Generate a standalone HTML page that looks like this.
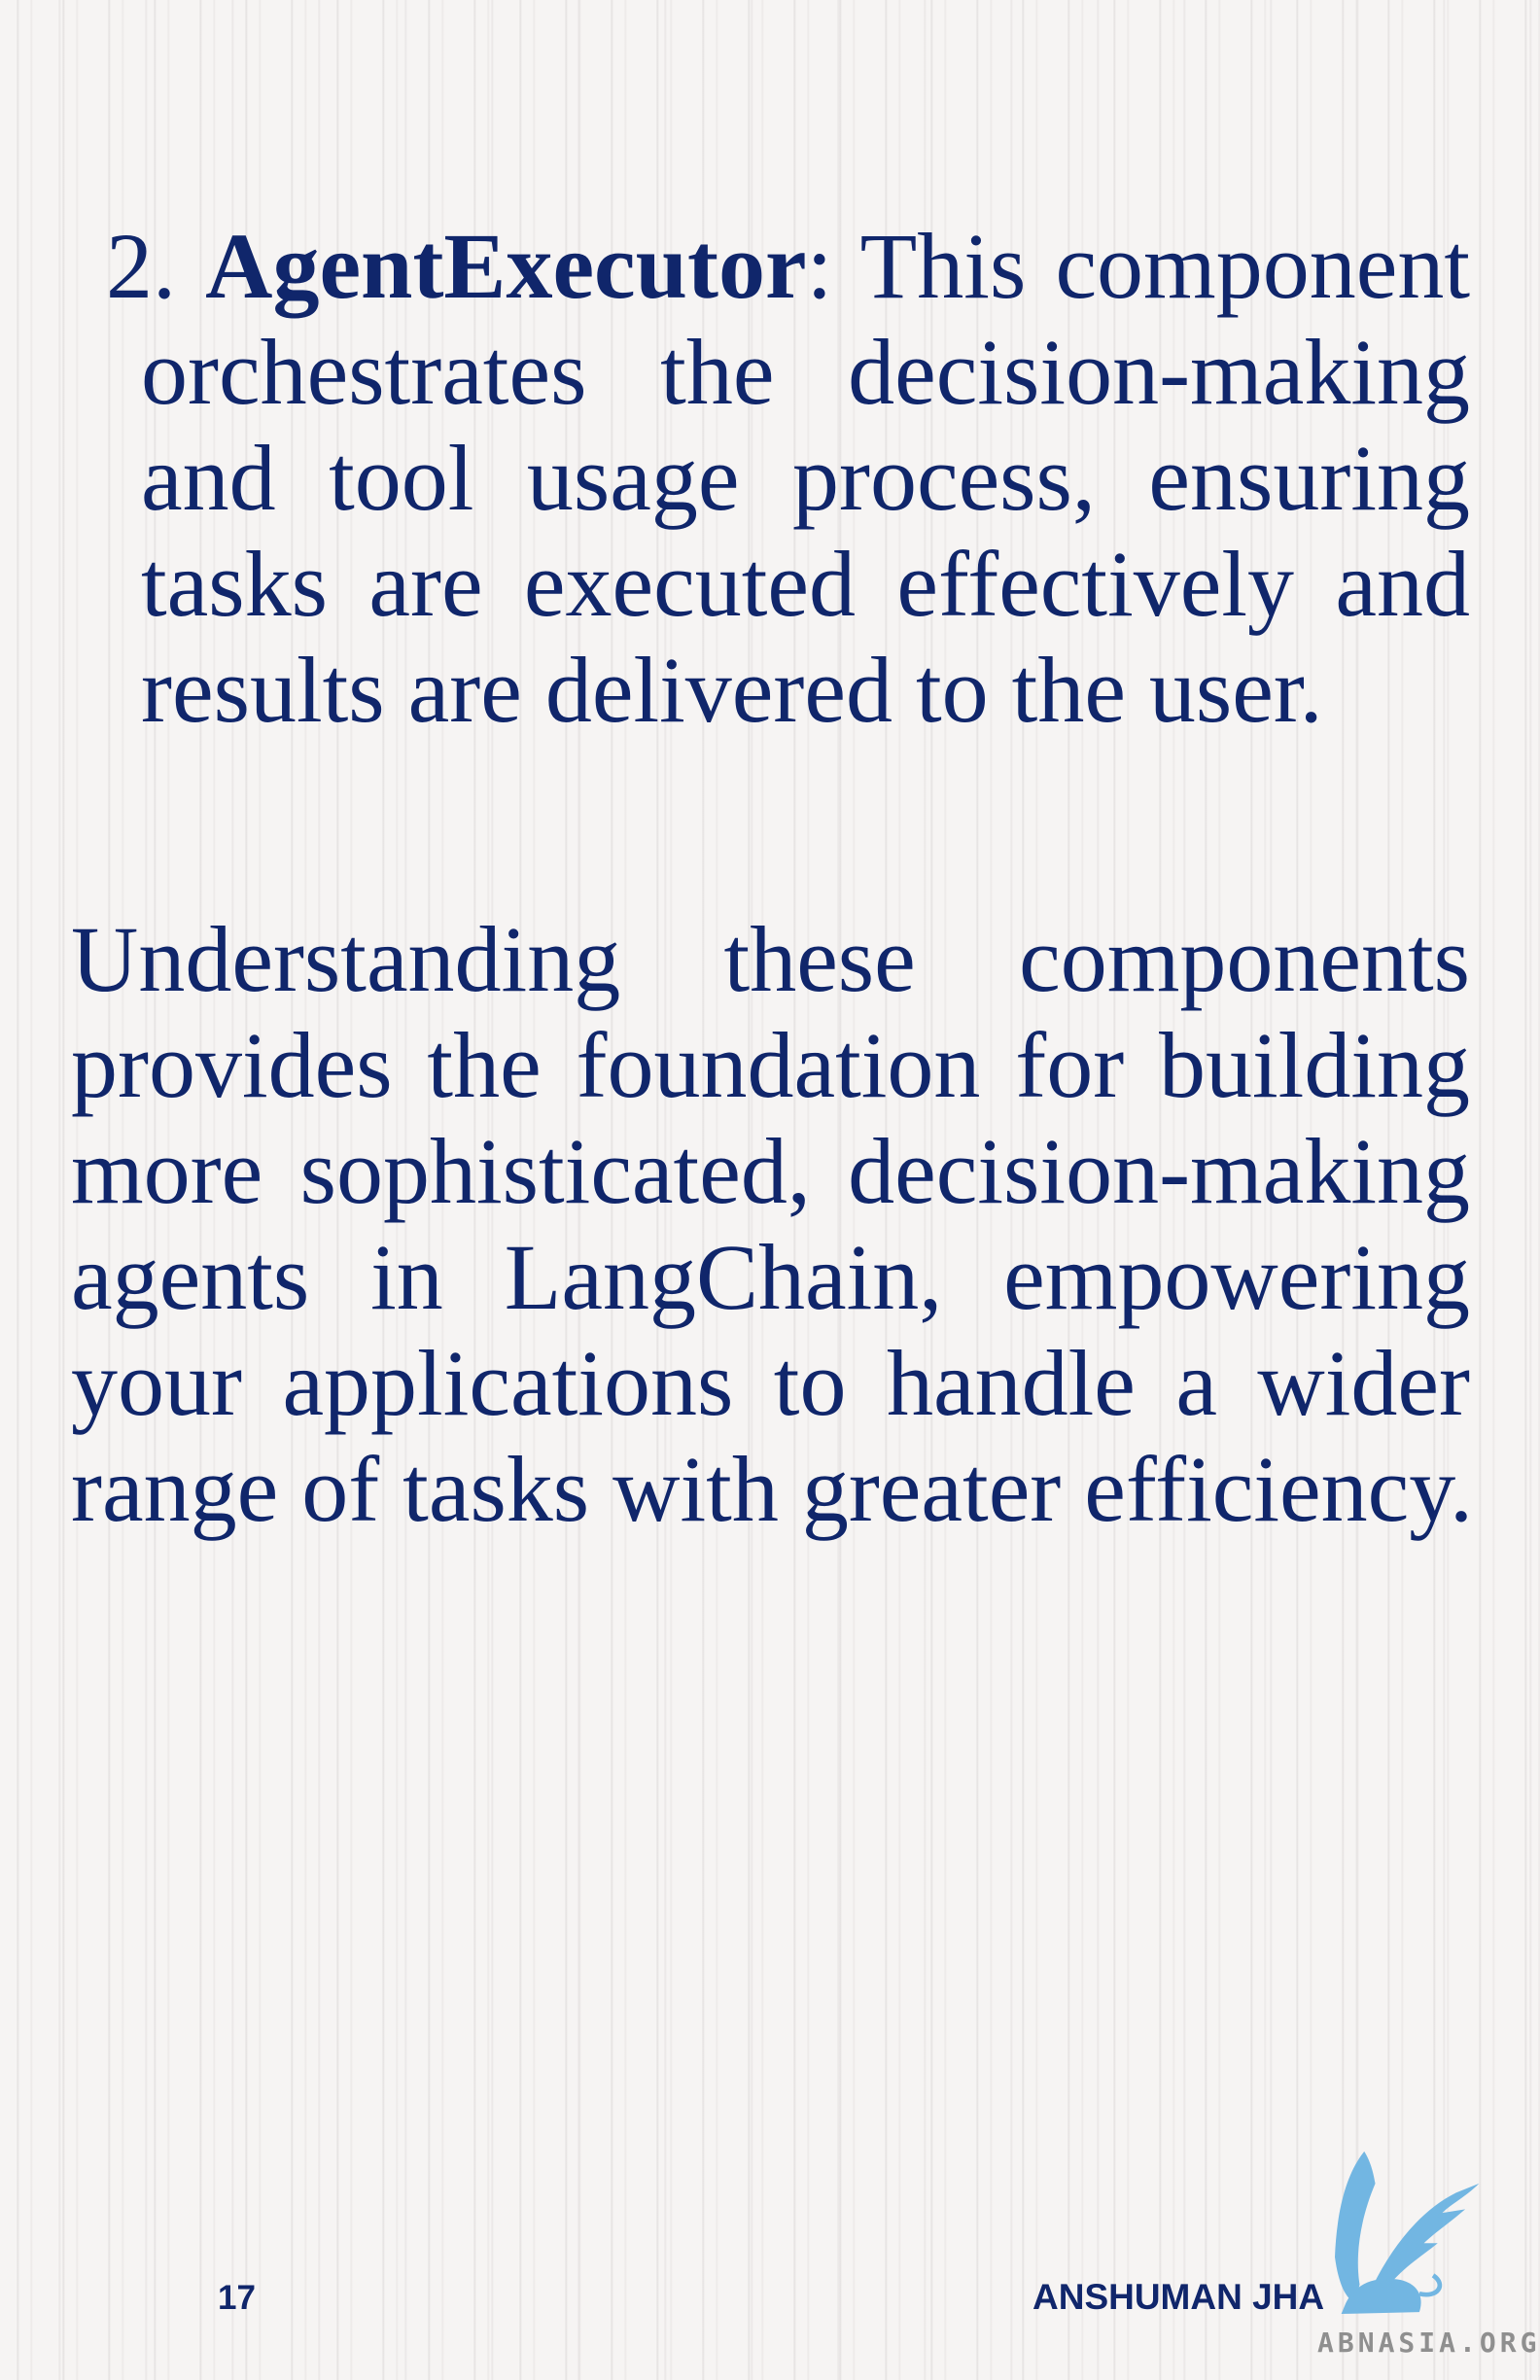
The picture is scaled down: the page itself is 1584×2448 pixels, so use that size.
<!DOCTYPE html>
<html><head><meta charset="utf-8"><style>
html,body{margin:0;padding:0}
body{width:1584px;height:2448px;position:relative;overflow:hidden;
background-color:#f6f4f3;
background-image:
repeating-linear-gradient(90deg, rgba(0,0,0,0) 0px, rgba(0,0,0,0) 17px, rgba(190,185,185,0.35) 18px, rgba(0,0,0,0) 20px, rgba(0,0,0,0) 31px, rgba(215,210,210,0.35) 32px, rgba(0,0,0,0) 34px, rgba(0,0,0,0) 47px),
repeating-linear-gradient(90deg, rgba(0,0,0,0) 0px, rgba(0,0,0,0) 60px, rgba(200,195,195,0.3) 61px, rgba(0,0,0,0) 63px, rgba(0,0,0,0) 89px);
font-family:"Liberation Serif",serif;color:#10266b}
.l{position:absolute;font-size:96px;line-height:109px;white-space:nowrap}
.j{text-align:justify;text-align-last:justify;white-space:normal}
.foot{position:absolute;font-family:"Liberation Sans",sans-serif;font-weight:bold;color:#10266b}
</style></head><body>
<div class="l j" style="left:109px;top:219px;width:1403px">2. <b>AgentExecutor</b>: This component</div>
<div class="l j" style="left:145px;top:328px;width:1367px">orchestrates the decision-making</div>
<div class="l j" style="left:145px;top:437px;width:1367px">and tool usage process, ensuring</div>
<div class="l j" style="left:145px;top:546px;width:1367px">tasks are executed effectively and</div>
<div class="l" style="left:145px;top:655px">results are delivered to the user.</div>

<div class="l j" style="left:73px;top:932px;width:1439px">Understanding these components</div>
<div class="l j" style="left:73px;top:1041px;width:1439px">provides the foundation for building</div>
<div class="l j" style="left:73px;top:1150px;width:1439px">more sophisticated, decision-making</div>
<div class="l j" style="left:73px;top:1259px;width:1439px">agents in LangChain, empowering</div>
<div class="l j" style="left:73px;top:1368px;width:1439px">your applications to handle a wider</div>
<div class="l" style="left:73px;top:1477px">range of tasks with greater efficiency.</div>

<div class="foot" style="left:224px;top:2344px;font-size:35px">17</div>
<div class="foot" style="left:1062px;top:2342px;font-size:37px">ANSHUMAN JHA</div>
<svg style="position:absolute;left:1356px;top:2208px" width="170" height="175" viewBox="0 0 180 185">
<g fill="#72b6e2">
<path d="M50 5 C30 30 20 70 18 120 C22 150 30 165 40 170 L45 150 C40 120 45 80 62 40 C60 30 58 18 50 5Z"/>
<path d="M60 150 C80 110 110 70 150 50 L175 40 C160 55 145 62 135 72 L160 68 C140 85 125 95 115 105 L130 105 C112 120 90 132 70 160Z"/>
<path d="M30 170 C40 150 60 140 90 145 C110 150 115 165 110 180 L25 182Z"/>
<path d="M110 160 C130 165 140 150 125 140" fill="none" stroke="#72b6e2" stroke-width="5"/>
</g>
</svg>
<div style="position:absolute;left:1355px;top:2393px;font-family:'DejaVu Sans Mono',monospace;font-weight:bold;font-size:28px;letter-spacing:4px;color:#8f8f8f">ABNASIA.ORG</div>
</body></html>
